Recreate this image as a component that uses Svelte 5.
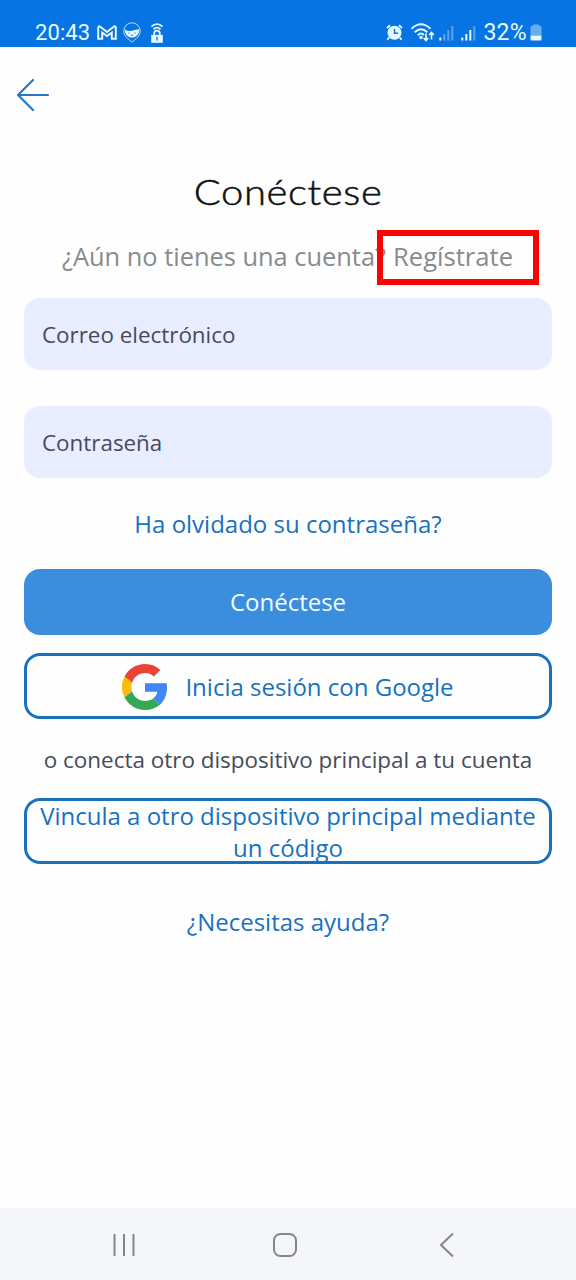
<script lang="ts">
  let email = $state("");
  let password = $state("");
</script>

<div class="screen">
  <header class="status">
    <div class="status-left">
      <span class="time">20:43</span>
      <svg class="mail" width="20" height="15" viewBox="0 0 20 15">
        <path
          d="M1.200 13.800V2.600Q1.200 1.200 2.600 1.200L10 7l7.400-5.800Q18.800 1.200 18.800 2.600v11.200h-4V7.500L10 11 5.200 7.500v6.300z"
        />
      </svg>
      <svg class="face" width="18" height="21" viewBox="0 0 18 21">
        <path class="thin" d="M9 .8a8.200 8.200 0 0 1 8.200 8.200c0 5-4.500 8-8.200 11.200C5.300 17 .8 14 .8 9A8.200 8.200 0 0 1 9 .8z" />
        <path class="fill" d="M1.800 7.500Q5 9.800 9 8.800q4.200-1.300 7.200-1.600c.2 5-3 8.400-7.200 8.400s-7-3.200-7.200-8.100z" />
        <path class="eyes" d="M5.200 11h1.300M11.300 11h1.300M7.800 13.200h2.400" />
      </svg>
      <svg class="hotspot" width="14" height="22" viewBox="0 0 15 22">
        <path class="line" d="M1.500 4.200Q7.500-1.200 13.500 4.200M3.800 7Q7.500 3.600 11.200 7M4.500 14v-2.500a3 3 0 0 1 6 0V14" />
        <path class="fill" d="M1.300 13h12.400v8.500H1.300z" />
        <path class="detail" d="M7.500 15v4" />
      </svg>
    </div>
    <div class="status-right">
      <svg class="alarm" width="17" height="17" viewBox="0 0 17 17">
        <path class="line" d="M1 4l3-2.800M16 4l-3-2.800M3 13.500l-1.500 2.200M14 13.500l1.500 2.200" />
        <circle class="fill" cx="8.500" cy="8.800" r="7" />
        <path class="detail" d="M8.500 5v4.200h3.500" />
      </svg>
      <svg class="wifi" width="26" height="19" viewBox="0 0 26 19">
        <path class="line" d="M1.500 5.800Q11-3.200 20.500 5.800M4.700 9.200Q11 3.200 17.300 9.200M7.700 12.300Q11 9 14 12" />
        <circle class="fill" cx="11" cy="14.500" r="1.800" />
        <path class="arrows" d="M16 10.500v6.500M13.700 15l2.300 2.500 2.300-2.500M21.500 16.500V10M19.200 12l2.300-2.500 2.300 2.500" />
      </svg>
      <svg class="signal" width="15" height="16" viewBox="0 0 15 16">
        <path class="full" d="M1.300 15.500v-3" />
        <path class="dim" d="M5.300 15.500V9M9.300 15.500V5M13.300 15.500V1" />
      </svg>
      <svg class="signal second" width="15" height="16" viewBox="0 0 15 16">
        <path class="full" d="M1.300 15.500v-3M5.300 15.500V9M9.300 15.500V5" />
        <path class="dim" d="M13.300 15.500V1" />
      </svg>
      <span class="percent">32%</span>
      <svg class="battery" width="12" height="17" viewBox="0 0 12 17">
        <path class="shell" d="M3 1.500Q3 .5 4 .5h4q1 0 1 1 2.500 0 2.500 2V12H.5V3.500q0-2 2.500-2z" />
        <path class="fill" d="M.5 11.800h11V15q0 1.500-1.500 1.500H2Q.5 16.500.5 15z" />
      </svg>
    </div>
  </header>

  <main>
    <button class="back" aria-label="Volver">
      <svg width="34" height="34" viewBox="0 0 34 34">
        <path d="M17 2L2 17l15 15M2 17h30" />
      </svg>
    </button>

    <h1><span>Conéctese</span></h1>
    <p class="signup">
      <span>¿Aún no tienes una cuenta?</span><a href="#registro">Regístrate</a>
    </p>

    <form onsubmit={(e) => e.preventDefault()}>
      <input type="text" placeholder="Correo electrónico" bind:value={email} />
      <input type="password" placeholder="Contraseña" bind:value={password} />
      <a class="link forgot" href="#recuperar">Ha olvidado su contraseña?</a>
      <button class="btn primary">Conéctese</button>
      <button class="btn outline google" type="button">
        <svg width="46" height="46" viewBox="0 0 48 48">
          <path fill="#ea4335" d="M24 9.500c3.540 0 6.710 1.220 9.210 3.600l6.850-6.850C35.900 2.380 30.470 0 24 0 14.620 0 6.510 5.380 2.560 13.220l7.980 6.190C12.430 13.720 17.740 9.500 24 9.500z" />
          <path fill="#4285f4" d="M46.980 24.550c0-1.570-.15-3.090-.38-4.550H24v9.020h12.940c-.58 2.960-2.260 5.480-4.780 7.180l7.730 6c4.510-4.180 7.090-10.360 7.090-17.650z" />
          <path fill="#fbbc05" d="M10.530 28.590a14.500 14.500 0 0 1 0-9.180l-7.980-6.190a24 24 0 0 0 0 21.560z" />
          <path fill="#34a853" d="M24 48c6.480 0 11.930-2.130 15.890-5.810l-7.730-6c-2.150 1.450-4.920 2.300-8.160 2.300-6.260 0-11.570-4.220-13.470-9.910l-7.980 6.190C6.510 42.620 14.620 48 24 48z" />
        </svg>
        <span>Inicia sesión con Google</span>
      </button>
    </form>

    <p class="other">o conecta otro dispositivo principal a tu cuenta</p>
    <button class="btn outline">Vincula a otro dispositivo principal mediante un código</button>
    <a class="link help" href="#ayuda">¿Necesitas ayuda?</a>
  </main>

  <nav>
    <svg width="24" height="26" viewBox="0 0 24 26">
      <path d="M2.500 2v22M12 2v22M21.500 2v22" />
    </svg>
    <svg width="26" height="26" viewBox="0 0 26 26">
      <rect x="2" y="2" width="22" height="22" rx="6.500" />
    </svg>
    <svg width="16" height="26" viewBox="0 0 16 26">
      <path d="M14 1.500L2 13l12 11.500" />
    </svg>
  </nav>
</div>

<style>
  :global(body) {
    margin: 0;
    background: #fff;
  }

  .screen {
    display: flex;
    flex-direction: column;
    width: 576px;
    height: 1280px;
    overflow: hidden;
    background: #fefefe;
    font-family: "Open Sans", sans-serif;
    color: #454b59;
  }

  svg {
    display: block;
    flex: none;
    fill: none;
  }

  .status {
    display: flex;
    justify-content: space-between;
    box-sizing: border-box;
    height: 47px;
    padding: 18px 34px 0 35px;
    background: #0874e4;
    color: #e6fbff;
    font-family: Roboto, sans-serif;
    font-size: 22px;
    line-height: 29px;
  }

  .status-left,
  .status-right {
    display: flex;
    align-items: center;
    height: 29px;
  }

  .time {
    width: 62px;
    letter-spacing: 0.1px;
  }

  .status .fill {
    fill: #e6fbff;
  }

  .status .line,
  .mail path {
    stroke: #e6fbff;
    stroke-width: 1.9;
  }

  .status .thin {
    stroke: #b9e0fa;
    stroke-width: 1;
  }

  .status .detail {
    stroke: #0874e4;
    stroke-width: 1.5;
  }

  .status .eyes {
    stroke: #0874e4;
    stroke-width: 0.9;
  }

  .face {
    margin-left: 6px;
  }

  .hotspot {
    margin-left: 9px;
  }

  .wifi {
    margin-left: 7px;
  }

  .arrows {
    stroke: #e6fbff;
    stroke-width: 1.6;
  }

  .signal {
    margin-left: 3px;
  }

  .signal.second {
    margin-left: 7px;
  }

  .full {
    stroke: #e6fbff;
    stroke-width: 2;
  }

  .dim {
    stroke: #58a5ef;
    stroke-width: 2;
  }

  .percent {
    margin: 0 3px 0 7px;
    font-size: 23px;
    letter-spacing: 0.3px;
  }

  .shell {
    fill: #69adf1;
  }

  main {
    display: flex;
    flex: 1;
    flex-direction: column;
    padding: 0 24px;
  }

  button {
    border: 0;
    background: none;
    font: inherit;
    cursor: pointer;
  }

  .back {
    align-self: flex-start;
    margin: 31px 0 0 -8px;
    padding: 0;
  }

  .back path {
    stroke: #2478c6;
    stroke-width: 2.2;
    stroke-linecap: round;
    stroke-linejoin: round;
  }

  h1 {
    margin: 55px 0 0;
    color: #111;
    font-family: Lato, sans-serif;
    font-size: 36px;
    font-weight: 300;
    line-height: 48px;
    text-align: center;
  }

  h1 span {
    display: inline-block;
    transform: scaleX(1.11);
    letter-spacing: 0.6px;
    -webkit-text-stroke: 0.5px #111;
  }

  .signup {
    display: flex;
    align-items: center;
    height: 55px;
    margin: 15px 0 13px;
    padding-left: 38px;
    color: #888b8e;
    font-size: 25.4px;
    white-space: nowrap;
  }

  .signup span {
    width: 315px;
    padding-bottom: 3px;
  }

  .signup a {
    position: relative;
    box-sizing: border-box;
    width: 162px;
    height: 55px;
    padding-left: 10px;
    border: 6px solid #fb0204;
    color: inherit;
    font-size: 25.6px;
    line-height: 42px;
    text-decoration: none;
  }

  form {
    display: flex;
    flex-direction: column;
  }

  input {
    box-sizing: border-box;
    height: 72px;
    margin: 0 0 36px;
    padding: 0 18px;
    border: 0;
    border-radius: 16px;
    background: #e8eeff;
    color: #454b59;
    font: inherit;
    font-size: 22.4px;
  }

  input::placeholder {
    color: #454b59;
    opacity: 1;
  }

  .link {
    align-self: center;
    color: #1871bf;
    font-size: 24px;
    line-height: 32px;
    text-decoration: none;
  }

  .forgot {
    margin: -6px 0 29px;
  }

  .btn {
    display: flex;
    align-items: center;
    justify-content: center;
    box-sizing: border-box;
    height: 66px;
    padding: 0;
    border-radius: 16px;
    font-size: 24px;
    line-height: 32px;
  }

  .primary {
    background: #3b8ddd;
    color: #f4fbff;
  }

  .outline {
    border: 3px solid #1871bf;
    color: #1871bf;
    padding-top: 2px;
  }

  .google {
    gap: 17px;
    margin-top: 18px;
  }

  .google svg {
    margin-bottom: 1px;
  }

  .other {
    margin: 25px -10px 22px;
    font-size: 22.45px;
    line-height: 32px;
    text-align: center;
    white-space: nowrap;
  }

  .help {
    margin-top: 42px;
  }

  nav {
    display: flex;
    align-items: center;
    box-sizing: border-box;
    height: 72px;
    padding: 2px 0 0 112px;
    background: #f5f6f9;
  }

  nav svg {
    margin-right: 136px;
    stroke: #85868a;
    stroke-width: 2;
  }

  nav svg:nth-child(2) {
    margin-right: 141px;
  }
</style>
